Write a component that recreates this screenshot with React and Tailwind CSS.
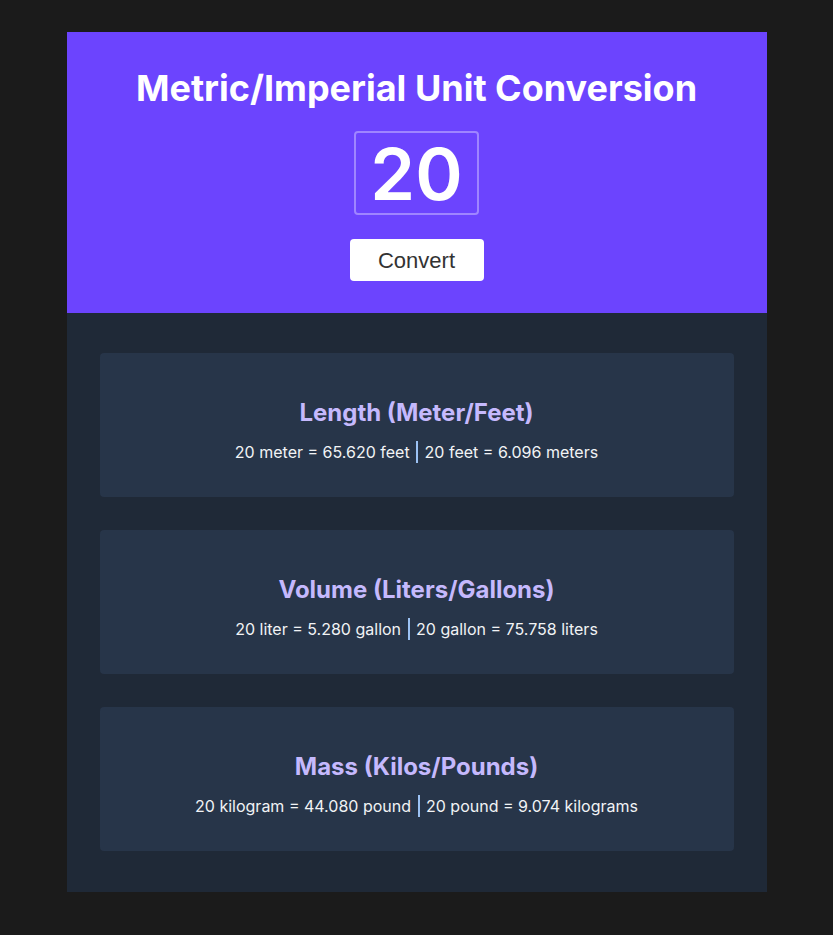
import { useState } from 'react';

const convert = (n) => ({
  length: { a: n * 3.281, b: n / 3.281 },
  volume: { a: n * 0.264, b: n / 0.264 },
  mass: { a: n * 2.204, b: n / 2.204 },
});

const Card = ({ title, children }) => (
  <div className="bg-[#273549] rounded h-[144px] flex flex-col items-center justify-center pt-[14px]">
    <h2 className="text-[24px] font-bold text-[#c5b9fd] leading-none">{title}</h2>
    <p className="text-[16px] text-[#f1f3f5] mt-[19px] leading-none">{children}</p>
  </div>
);

const Sep = () => <span className="inline-block w-[2px] h-[22px] bg-[#9cc2f4] align-middle mx-[2px] -mt-[3px]" />;

export default function App() {
  const [value, setValue] = useState('20');
  const [n, setN] = useState(20);
  const r = convert(n);

  return (
    <div className="min-h-[935px] bg-[#1b1b1b] pt-[32px] font-['Inter',sans-serif]">
      <div className="w-[700px] mx-auto">
        <header className="bg-[#6c44fe] h-[281px] flex flex-col items-center pt-[38px]">
          <h1 className="text-[36px] font-bold text-white leading-none">
            Metric/Imperial Unit Conversion
          </h1>
          <input
            value={value}
            onChange={(e) => setValue(e.target.value)}
            className="mt-[25px] w-[125px] h-[84px] bg-transparent border-2 border-[#9f85ff] rounded-[4px] text-center text-white text-[72px] leading-none font-semibold font-['Inter',sans-serif] outline-none"
          />
          <button
            onClick={() => setN(Number(value) || 0)}
            className="mt-[24px] w-[134px] h-[42px] bg-white rounded-[4px] text-[22px] text-[#333] font-['Liberation_Sans',sans-serif]"
          >
            Convert
          </button>
        </header>

        <main className="bg-[#1f2937] px-[33px] pt-[40px] pb-[41px] flex flex-col gap-[33px]">
          <Card title="Length (Meter/Feet)">
            {n} meter = {r.length.a.toFixed(3)} feet <Sep /> {n} feet = {r.length.b.toFixed(3)} meters
          </Card>
          <Card title="Volume (Liters/Gallons)">
            {n} liter = {r.volume.a.toFixed(3)} gallon <Sep /> {n} gallon = {r.volume.b.toFixed(3)} liters
          </Card>
          <Card title="Mass (Kilos/Pounds)">
            {n} kilogram = {r.mass.a.toFixed(3)} pound <Sep /> {n} pound = {r.mass.b.toFixed(3)} kilograms
          </Card>
        </main>
      </div>
    </div>
  );
}
